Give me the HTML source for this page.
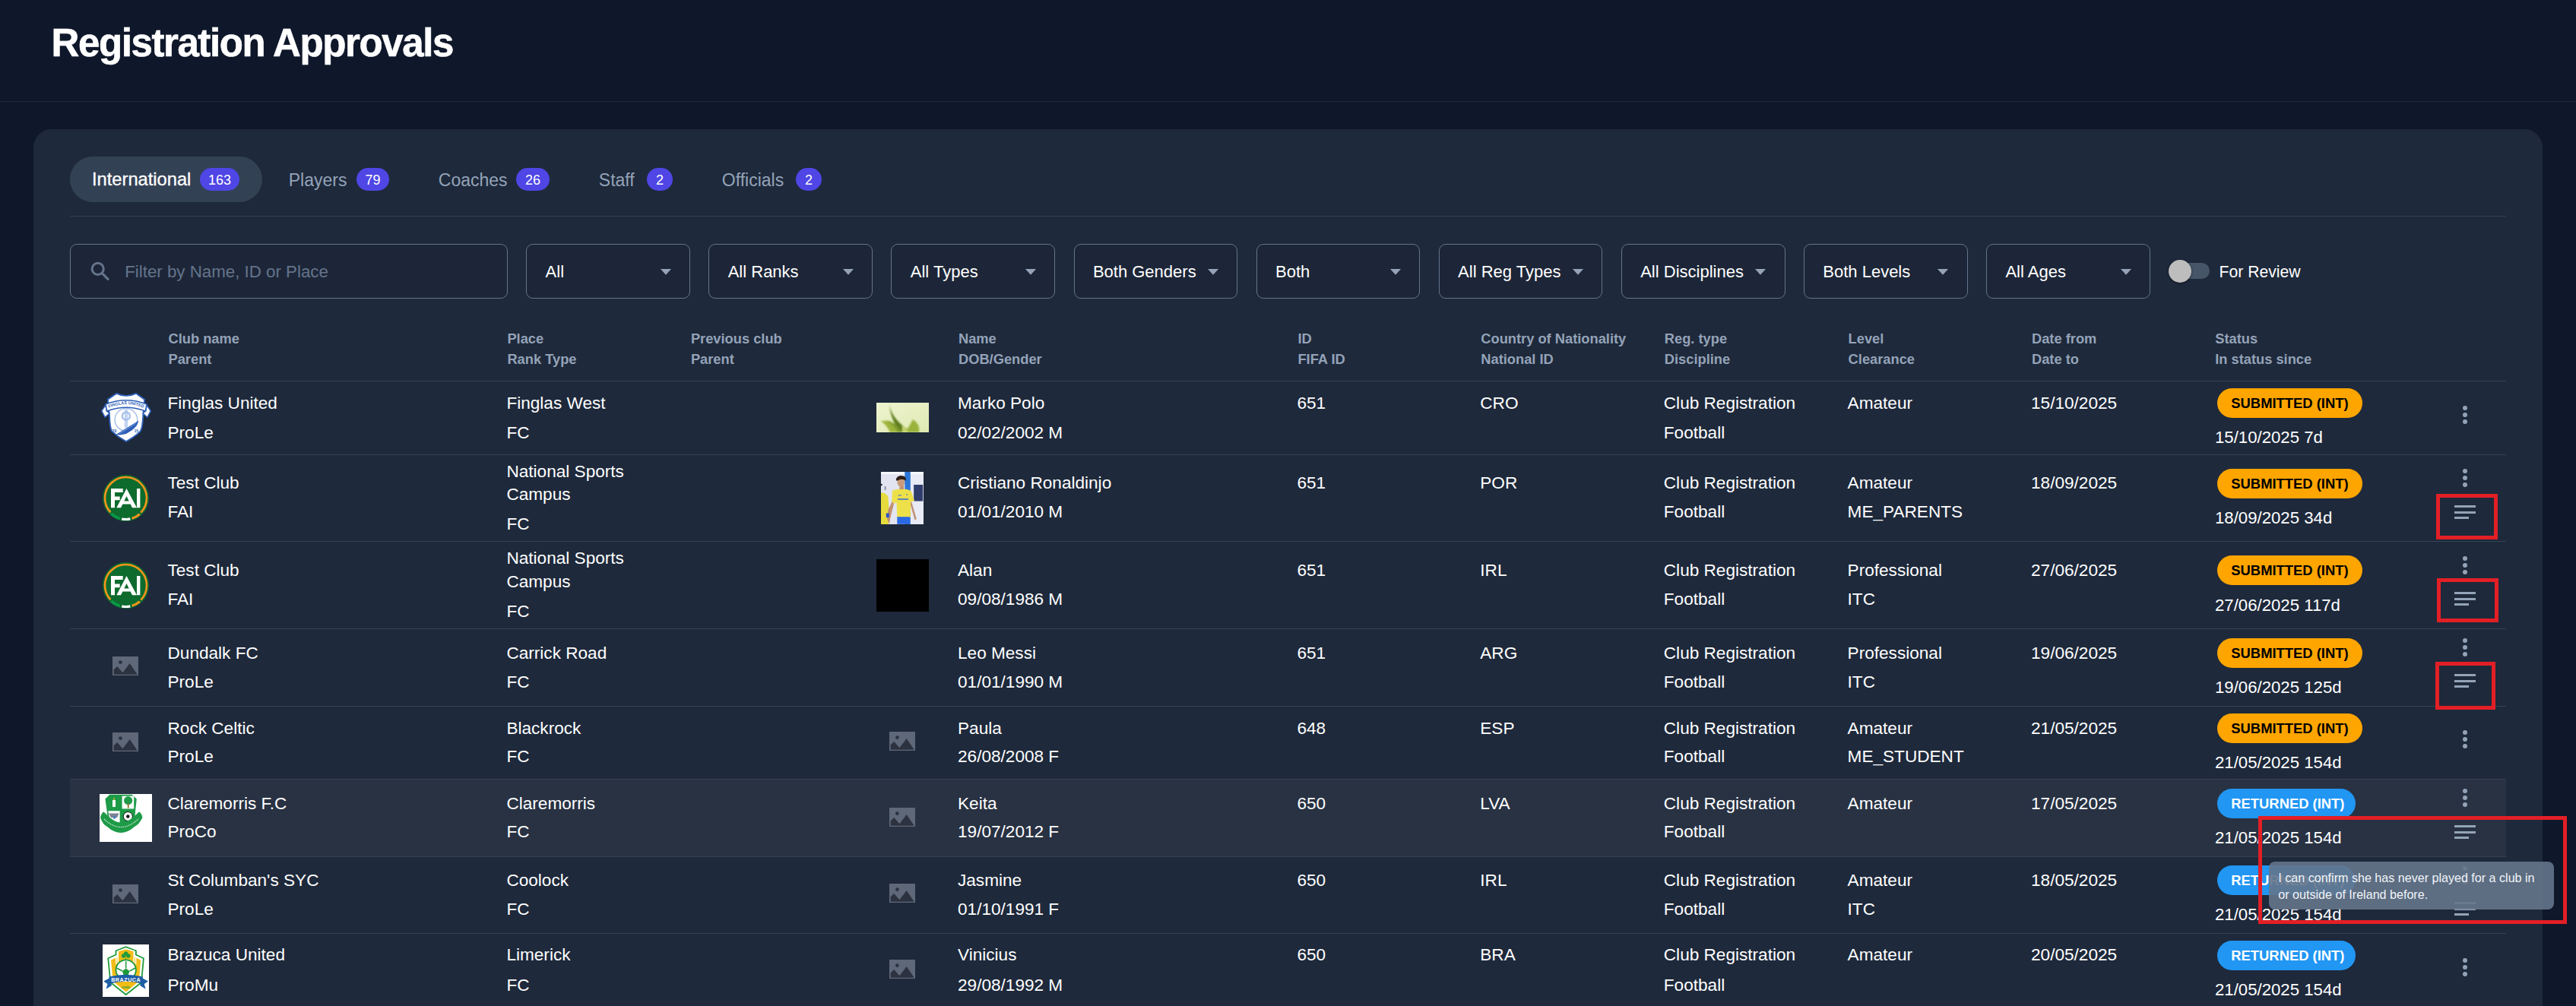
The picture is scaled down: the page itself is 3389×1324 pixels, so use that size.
<!DOCTYPE html>
<html><head><meta charset="utf-8"><style>
html,body{margin:0;padding:0;}
body{width:3389px;height:1324px;overflow:hidden;position:relative;background:#0f172a;font-family:"Liberation Sans", sans-serif;}
.t{position:absolute;white-space:nowrap;}
.r{position:absolute;}
</style></head><body>
<div class="t" style="left:67.5px;top:30.6px;font-size:51px;line-height:51px;font-weight:700;color:#ffffff;letter-spacing:-1.4px;-webkit-text-stroke:0.6px #fff;">Registration Approvals</div>
<div class="r" style="left:0.0px;top:133.0px;width:3389.0px;height:1.0px;background:#1e293b;"></div>
<div class="r" style="left:44.0px;top:170.0px;width:3301.0px;height:1230.0px;background:#1e293b;border-radius:24px;"></div>
<div class="r" style="left:92.0px;top:206.0px;width:253.0px;height:60.0px;background:#334155;border-radius:30px;"></div>
<div class="t" style="left:121.0px;top:224.9px;font-size:23.7px;line-height:23.7px;font-weight:400;color:#ffffff;-webkit-text-stroke:0.3px #fff;">International</div>
<div class="r" style="left:263.0px;top:221.0px;width:52.0px;height:30.0px;background:#4f46e5;border-radius:15px;"></div>
<div class="t" style="left:289.0px;top:227.9px;font-size:18px;line-height:18px;font-weight:400;color:#ffffff;transform:translateX(-50%);">163</div>
<div class="t" style="left:379.7px;top:225.5px;font-size:23px;line-height:23px;font-weight:400;color:#94a3b8;">Players</div>
<div class="r" style="left:469.0px;top:221.0px;width:43.0px;height:30.0px;background:#4f46e5;border-radius:15px;"></div>
<div class="t" style="left:490.5px;top:227.9px;font-size:18px;line-height:18px;font-weight:400;color:#ffffff;transform:translateX(-50%);">79</div>
<div class="t" style="left:576.8px;top:225.5px;font-size:23px;line-height:23px;font-weight:400;color:#94a3b8;">Coaches</div>
<div class="r" style="left:679.0px;top:221.0px;width:44.0px;height:30.0px;background:#4f46e5;border-radius:15px;"></div>
<div class="t" style="left:701.0px;top:227.9px;font-size:18px;line-height:18px;font-weight:400;color:#ffffff;transform:translateX(-50%);">26</div>
<div class="t" style="left:787.8px;top:225.5px;font-size:23px;line-height:23px;font-weight:400;color:#94a3b8;">Staff</div>
<div class="r" style="left:851.0px;top:221.0px;width:34.0px;height:30.0px;background:#4f46e5;border-radius:15px;"></div>
<div class="t" style="left:868.0px;top:227.9px;font-size:18px;line-height:18px;font-weight:400;color:#ffffff;transform:translateX(-50%);">2</div>
<div class="t" style="left:949.8px;top:225.5px;font-size:23px;line-height:23px;font-weight:400;color:#94a3b8;">Officials</div>
<div class="r" style="left:1047.0px;top:221.0px;width:34.0px;height:30.0px;background:#4f46e5;border-radius:15px;"></div>
<div class="t" style="left:1064.0px;top:227.9px;font-size:18px;line-height:18px;font-weight:400;color:#ffffff;transform:translateX(-50%);">2</div>
<div class="r" style="left:92.0px;top:284.0px;width:3205.0px;height:1.0px;background:#334155;"></div>
<div class="r" style="left:92.0px;top:321.0px;width:576.0px;height:72.0px;border:1px solid #64748b;border-radius:9px;box-sizing:border-box;background:#1d2638;"></div>
<svg class="r" style="left:116px;top:341px" width="32" height="32" viewBox="0 0 32 32"><circle cx="12.7" cy="12.9" r="7.6" fill="none" stroke="#64748b" stroke-width="3"/><line x1="18.3" y1="18.6" x2="26" y2="26.3" stroke="#64748b" stroke-width="3.2" stroke-linecap="round"/></svg>
<div class="t" style="left:164.2px;top:346.8px;font-size:22.3px;line-height:22.3px;font-weight:400;color:#64748b;">Filter by Name, ID or Place</div>
<div class="r" style="left:692.2px;top:321.0px;width:215.8px;height:72.0px;border:1px solid #64748b;border-radius:9px;box-sizing:border-box;background:#1d2638;"></div>
<div class="t" style="left:717.6px;top:347.3px;font-size:22px;line-height:22px;font-weight:400;color:#ffffff;">All</div>
<svg class="r" style="left:868.7px;top:353.5px" width="14" height="8" viewBox="0 0 14 8"><path d="M0 0H14L7 7.7Z" fill="#94a3b8"/></svg>
<div class="r" style="left:932.3px;top:321.0px;width:215.8px;height:72.0px;border:1px solid #64748b;border-radius:9px;box-sizing:border-box;background:#1d2638;"></div>
<div class="t" style="left:957.7px;top:347.3px;font-size:22px;line-height:22px;font-weight:400;color:#ffffff;">All Ranks</div>
<svg class="r" style="left:1108.8px;top:353.5px" width="14" height="8" viewBox="0 0 14 8"><path d="M0 0H14L7 7.7Z" fill="#94a3b8"/></svg>
<div class="r" style="left:1172.4px;top:321.0px;width:215.8px;height:72.0px;border:1px solid #64748b;border-radius:9px;box-sizing:border-box;background:#1d2638;"></div>
<div class="t" style="left:1197.8px;top:347.3px;font-size:22px;line-height:22px;font-weight:400;color:#ffffff;">All Types</div>
<svg class="r" style="left:1348.9px;top:353.5px" width="14" height="8" viewBox="0 0 14 8"><path d="M0 0H14L7 7.7Z" fill="#94a3b8"/></svg>
<div class="r" style="left:1412.5px;top:321.0px;width:215.8px;height:72.0px;border:1px solid #64748b;border-radius:9px;box-sizing:border-box;background:#1d2638;"></div>
<div class="t" style="left:1437.9px;top:347.3px;font-size:22px;line-height:22px;font-weight:400;color:#ffffff;">Both Genders</div>
<svg class="r" style="left:1589.0px;top:353.5px" width="14" height="8" viewBox="0 0 14 8"><path d="M0 0H14L7 7.7Z" fill="#94a3b8"/></svg>
<div class="r" style="left:1652.6px;top:321.0px;width:215.8px;height:72.0px;border:1px solid #64748b;border-radius:9px;box-sizing:border-box;background:#1d2638;"></div>
<div class="t" style="left:1678.0px;top:347.3px;font-size:22px;line-height:22px;font-weight:400;color:#ffffff;">Both</div>
<svg class="r" style="left:1829.1px;top:353.5px" width="14" height="8" viewBox="0 0 14 8"><path d="M0 0H14L7 7.7Z" fill="#94a3b8"/></svg>
<div class="r" style="left:1892.7px;top:321.0px;width:215.8px;height:72.0px;border:1px solid #64748b;border-radius:9px;box-sizing:border-box;background:#1d2638;"></div>
<div class="t" style="left:1918.1px;top:347.3px;font-size:22px;line-height:22px;font-weight:400;color:#ffffff;">All Reg Types</div>
<svg class="r" style="left:2069.2px;top:353.5px" width="14" height="8" viewBox="0 0 14 8"><path d="M0 0H14L7 7.7Z" fill="#94a3b8"/></svg>
<div class="r" style="left:2132.8px;top:321.0px;width:215.8px;height:72.0px;border:1px solid #64748b;border-radius:9px;box-sizing:border-box;background:#1d2638;"></div>
<div class="t" style="left:2158.2px;top:347.3px;font-size:22px;line-height:22px;font-weight:400;color:#ffffff;">All Disciplines</div>
<svg class="r" style="left:2309.3px;top:353.5px" width="14" height="8" viewBox="0 0 14 8"><path d="M0 0H14L7 7.7Z" fill="#94a3b8"/></svg>
<div class="r" style="left:2372.9px;top:321.0px;width:215.8px;height:72.0px;border:1px solid #64748b;border-radius:9px;box-sizing:border-box;background:#1d2638;"></div>
<div class="t" style="left:2398.3px;top:347.3px;font-size:22px;line-height:22px;font-weight:400;color:#ffffff;">Both Levels</div>
<svg class="r" style="left:2549.4px;top:353.5px" width="14" height="8" viewBox="0 0 14 8"><path d="M0 0H14L7 7.7Z" fill="#94a3b8"/></svg>
<div class="r" style="left:2613.0px;top:321.0px;width:215.8px;height:72.0px;border:1px solid #64748b;border-radius:9px;box-sizing:border-box;background:#1d2638;"></div>
<div class="t" style="left:2638.4px;top:347.3px;font-size:22px;line-height:22px;font-weight:400;color:#ffffff;">All Ages</div>
<svg class="r" style="left:2789.5px;top:353.5px" width="14" height="8" viewBox="0 0 14 8"><path d="M0 0H14L7 7.7Z" fill="#94a3b8"/></svg>
<div class="r" style="left:2860.0px;top:346.0px;width:47.0px;height:21.0px;background:#475569;border-radius:11px;"></div>
<div class="r" style="left:2852.7px;top:341.6px;width:30.5px;height:30.5px;background:#bdbdbd;border-radius:50%;box-shadow:0 1px 3px rgba(0,0,0,.5);"></div>
<div class="t" style="left:2919.5px;top:347.0px;font-size:21.2px;line-height:21.2px;font-weight:400;color:#ffffff;">For Review</div>
<div class="t" style="left:221.5px;top:436.9px;font-size:18.3px;line-height:18.3px;font-weight:700;color:#94a3b8;">Club name</div>
<div class="t" style="left:221.5px;top:464.1px;font-size:18.3px;line-height:18.3px;font-weight:700;color:#94a3b8;">Parent</div>
<div class="t" style="left:667.4px;top:436.9px;font-size:18.3px;line-height:18.3px;font-weight:700;color:#94a3b8;">Place</div>
<div class="t" style="left:667.4px;top:464.1px;font-size:18.3px;line-height:18.3px;font-weight:700;color:#94a3b8;">Rank Type</div>
<div class="t" style="left:908.9px;top:436.9px;font-size:18.3px;line-height:18.3px;font-weight:700;color:#94a3b8;">Previous club</div>
<div class="t" style="left:908.9px;top:464.1px;font-size:18.3px;line-height:18.3px;font-weight:700;color:#94a3b8;">Parent</div>
<div class="t" style="left:1261.0px;top:436.9px;font-size:18.3px;line-height:18.3px;font-weight:700;color:#94a3b8;">Name</div>
<div class="t" style="left:1261.0px;top:464.1px;font-size:18.3px;line-height:18.3px;font-weight:700;color:#94a3b8;">DOB/Gender</div>
<div class="t" style="left:1707.4px;top:436.9px;font-size:18.3px;line-height:18.3px;font-weight:700;color:#94a3b8;">ID</div>
<div class="t" style="left:1707.4px;top:464.1px;font-size:18.3px;line-height:18.3px;font-weight:700;color:#94a3b8;">FIFA ID</div>
<div class="t" style="left:1948.3px;top:436.9px;font-size:18.3px;line-height:18.3px;font-weight:700;color:#94a3b8;">Country of Nationality</div>
<div class="t" style="left:1948.3px;top:464.1px;font-size:18.3px;line-height:18.3px;font-weight:700;color:#94a3b8;">National ID</div>
<div class="t" style="left:2189.8px;top:436.9px;font-size:18.3px;line-height:18.3px;font-weight:700;color:#94a3b8;">Reg. type</div>
<div class="t" style="left:2189.8px;top:464.1px;font-size:18.3px;line-height:18.3px;font-weight:700;color:#94a3b8;">Discipline</div>
<div class="t" style="left:2431.6px;top:436.9px;font-size:18.3px;line-height:18.3px;font-weight:700;color:#94a3b8;">Level</div>
<div class="t" style="left:2431.6px;top:464.1px;font-size:18.3px;line-height:18.3px;font-weight:700;color:#94a3b8;">Clearance</div>
<div class="t" style="left:2673.0px;top:436.9px;font-size:18.3px;line-height:18.3px;font-weight:700;color:#94a3b8;">Date from</div>
<div class="t" style="left:2673.0px;top:464.1px;font-size:18.3px;line-height:18.3px;font-weight:700;color:#94a3b8;">Date to</div>
<div class="t" style="left:2914.2px;top:436.9px;font-size:18.3px;line-height:18.3px;font-weight:700;color:#94a3b8;">Status</div>
<div class="t" style="left:2914.2px;top:464.1px;font-size:18.3px;line-height:18.3px;font-weight:700;color:#94a3b8;">In status since</div>
<div class="r" style="left:92.0px;top:1025.3px;width:3205.0px;height:102.1px;background:#283243;"></div>
<div class="r" style="left:92.0px;top:501.3px;width:3205.0px;height:1.0px;background:#374151;"></div>
<div class="r" style="left:92.0px;top:598.3px;width:3205.0px;height:1.0px;background:#374151;"></div>
<div class="r" style="left:92.0px;top:712.2px;width:3205.0px;height:1.0px;background:#374151;"></div>
<div class="r" style="left:92.0px;top:827.4px;width:3205.0px;height:1.0px;background:#374151;"></div>
<div class="r" style="left:92.0px;top:929.0px;width:3205.0px;height:1.0px;background:#374151;"></div>
<div class="r" style="left:92.0px;top:1025.3px;width:3205.0px;height:1.0px;background:#374151;"></div>
<div class="r" style="left:92.0px;top:1127.4px;width:3205.0px;height:1.0px;background:#374151;"></div>
<div class="r" style="left:92.0px;top:1228.2px;width:3205.0px;height:1.0px;background:#374151;"></div>
<div class="t" style="left:220.5px;top:519.8px;font-size:22.6px;line-height:22.6px;font-weight:400;color:#ffffff;">Finglas United</div>
<div class="t" style="left:220.5px;top:558.5px;font-size:22.6px;line-height:22.6px;font-weight:400;color:#ffffff;">ProLe</div>
<div class="t" style="left:666.4px;top:519.8px;font-size:22.6px;line-height:22.6px;font-weight:400;color:#ffffff;">Finglas West</div>
<div class="t" style="left:666.4px;top:558.5px;font-size:22.6px;line-height:22.6px;font-weight:400;color:#ffffff;">FC</div>
<div class="t" style="left:1260.0px;top:519.8px;font-size:22.6px;line-height:22.6px;font-weight:400;color:#ffffff;">Marko Polo</div>
<div class="t" style="left:1260.0px;top:558.5px;font-size:22.6px;line-height:22.6px;font-weight:400;color:#ffffff;">02/02/2002 M</div>
<div class="t" style="left:1706.4px;top:519.8px;font-size:22.6px;line-height:22.6px;font-weight:400;color:#ffffff;">651</div>
<div class="t" style="left:1947.3px;top:519.8px;font-size:22.6px;line-height:22.6px;font-weight:400;color:#ffffff;">CRO</div>
<div class="t" style="left:2188.8px;top:519.8px;font-size:22.6px;line-height:22.6px;font-weight:400;color:#ffffff;">Club Registration</div>
<div class="t" style="left:2188.8px;top:558.5px;font-size:22.6px;line-height:22.6px;font-weight:400;color:#ffffff;">Football</div>
<div class="t" style="left:2430.6px;top:519.8px;font-size:22.6px;line-height:22.6px;font-weight:400;color:#ffffff;">Amateur</div>
<div class="t" style="left:2672.0px;top:519.8px;font-size:22.6px;line-height:22.6px;font-weight:400;color:#ffffff;">15/10/2025</div>
<div class="r" style="left:2917.0px;top:511.0px;width:191.0px;height:39.0px;background:#ffa500;border-radius:20px;"></div>
<div class="t" style="left:2935.3px;top:522.3px;font-size:18.4px;line-height:18.4px;font-weight:700;color:#000000;">SUBMITTED (INT)</div>
<div class="t" style="left:2914.0px;top:564.8px;font-size:22.2px;line-height:22.2px;font-weight:400;color:#ffffff;">15/10/2025 7d</div>
<div class="r" style="left:3240.0px;top:534.0px;width:6.0px;height:6.0px;background:#94a3b8;border-radius:50%;"></div>
<div class="r" style="left:3240.0px;top:543.0px;width:6.0px;height:6.0px;background:#94a3b8;border-radius:50%;"></div>
<div class="r" style="left:3240.0px;top:552.0px;width:6.0px;height:6.0px;background:#94a3b8;border-radius:50%;"></div>
<div class="t" style="left:220.5px;top:625.4px;font-size:22.6px;line-height:22.6px;font-weight:400;color:#ffffff;">Test Club</div>
<div class="t" style="left:220.5px;top:663.4px;font-size:22.6px;line-height:22.6px;font-weight:400;color:#ffffff;">FAI</div>
<div class="t" style="left:666.4px;top:609.5px;font-size:22.6px;line-height:22.6px;font-weight:400;color:#ffffff;">National Sports</div>
<div class="t" style="left:666.4px;top:640.3px;font-size:22.6px;line-height:22.6px;font-weight:400;color:#ffffff;">Campus</div>
<div class="t" style="left:666.4px;top:679.1px;font-size:22.6px;line-height:22.6px;font-weight:400;color:#ffffff;">FC</div>
<div class="t" style="left:1260.0px;top:625.4px;font-size:22.6px;line-height:22.6px;font-weight:400;color:#ffffff;">Cristiano Ronaldinjo</div>
<div class="t" style="left:1260.0px;top:663.4px;font-size:22.6px;line-height:22.6px;font-weight:400;color:#ffffff;">01/01/2010 M</div>
<div class="t" style="left:1706.4px;top:625.4px;font-size:22.6px;line-height:22.6px;font-weight:400;color:#ffffff;">651</div>
<div class="t" style="left:1947.3px;top:625.4px;font-size:22.6px;line-height:22.6px;font-weight:400;color:#ffffff;">POR</div>
<div class="t" style="left:2188.8px;top:625.4px;font-size:22.6px;line-height:22.6px;font-weight:400;color:#ffffff;">Club Registration</div>
<div class="t" style="left:2188.8px;top:663.4px;font-size:22.6px;line-height:22.6px;font-weight:400;color:#ffffff;">Football</div>
<div class="t" style="left:2430.6px;top:625.4px;font-size:22.6px;line-height:22.6px;font-weight:400;color:#ffffff;">Amateur</div>
<div class="t" style="left:2430.6px;top:663.4px;font-size:22.6px;line-height:22.6px;font-weight:400;color:#ffffff;">ME_PARENTS</div>
<div class="t" style="left:2672.0px;top:625.4px;font-size:22.6px;line-height:22.6px;font-weight:400;color:#ffffff;">18/09/2025</div>
<div class="r" style="left:2917.0px;top:617.0px;width:191.0px;height:39.0px;background:#ffa500;border-radius:20px;"></div>
<div class="t" style="left:2935.3px;top:628.3px;font-size:18.4px;line-height:18.4px;font-weight:700;color:#000000;">SUBMITTED (INT)</div>
<div class="t" style="left:2914.0px;top:670.8px;font-size:22.2px;line-height:22.2px;font-weight:400;color:#ffffff;">18/09/2025 34d</div>
<div class="r" style="left:3240.0px;top:617.0px;width:6.0px;height:6.0px;background:#94a3b8;border-radius:50%;"></div>
<div class="r" style="left:3240.0px;top:626.0px;width:6.0px;height:6.0px;background:#94a3b8;border-radius:50%;"></div>
<div class="r" style="left:3240.0px;top:635.0px;width:6.0px;height:6.0px;background:#94a3b8;border-radius:50%;"></div>
<div class="r" style="left:3229.0px;top:665.0px;width:28.0px;height:3.2px;background:#94a3b8;"></div>
<div class="r" style="left:3229.0px;top:672.5px;width:28.0px;height:3.1px;background:#94a3b8;"></div>
<div class="r" style="left:3229.0px;top:680.0px;width:19.0px;height:3.1px;background:#94a3b8;"></div>
<div class="t" style="left:220.5px;top:739.7px;font-size:22.6px;line-height:22.6px;font-weight:400;color:#ffffff;">Test Club</div>
<div class="t" style="left:220.5px;top:777.7px;font-size:22.6px;line-height:22.6px;font-weight:400;color:#ffffff;">FAI</div>
<div class="t" style="left:666.4px;top:724.3px;font-size:22.6px;line-height:22.6px;font-weight:400;color:#ffffff;">National Sports</div>
<div class="t" style="left:666.4px;top:755.4px;font-size:22.6px;line-height:22.6px;font-weight:400;color:#ffffff;">Campus</div>
<div class="t" style="left:666.4px;top:793.9px;font-size:22.6px;line-height:22.6px;font-weight:400;color:#ffffff;">FC</div>
<div class="t" style="left:1260.0px;top:739.7px;font-size:22.6px;line-height:22.6px;font-weight:400;color:#ffffff;">Alan</div>
<div class="t" style="left:1260.0px;top:777.7px;font-size:22.6px;line-height:22.6px;font-weight:400;color:#ffffff;">09/08/1986 M</div>
<div class="t" style="left:1706.4px;top:739.7px;font-size:22.6px;line-height:22.6px;font-weight:400;color:#ffffff;">651</div>
<div class="t" style="left:1947.3px;top:739.7px;font-size:22.6px;line-height:22.6px;font-weight:400;color:#ffffff;">IRL</div>
<div class="t" style="left:2188.8px;top:739.7px;font-size:22.6px;line-height:22.6px;font-weight:400;color:#ffffff;">Club Registration</div>
<div class="t" style="left:2188.8px;top:777.7px;font-size:22.6px;line-height:22.6px;font-weight:400;color:#ffffff;">Football</div>
<div class="t" style="left:2430.6px;top:739.7px;font-size:22.6px;line-height:22.6px;font-weight:400;color:#ffffff;">Professional</div>
<div class="t" style="left:2430.6px;top:777.7px;font-size:22.6px;line-height:22.6px;font-weight:400;color:#ffffff;">ITC</div>
<div class="t" style="left:2672.0px;top:739.7px;font-size:22.6px;line-height:22.6px;font-weight:400;color:#ffffff;">27/06/2025</div>
<div class="r" style="left:2917.0px;top:731.0px;width:191.0px;height:39.0px;background:#ffa500;border-radius:20px;"></div>
<div class="t" style="left:2935.3px;top:742.3px;font-size:18.4px;line-height:18.4px;font-weight:700;color:#000000;">SUBMITTED (INT)</div>
<div class="t" style="left:2914.0px;top:785.5px;font-size:22.2px;line-height:22.2px;font-weight:400;color:#ffffff;">27/06/2025 117d</div>
<div class="r" style="left:3240.0px;top:732.0px;width:6.0px;height:6.0px;background:#94a3b8;border-radius:50%;"></div>
<div class="r" style="left:3240.0px;top:741.0px;width:6.0px;height:6.0px;background:#94a3b8;border-radius:50%;"></div>
<div class="r" style="left:3240.0px;top:750.0px;width:6.0px;height:6.0px;background:#94a3b8;border-radius:50%;"></div>
<div class="r" style="left:3229.0px;top:779.0px;width:28.0px;height:3.2px;background:#94a3b8;"></div>
<div class="r" style="left:3229.0px;top:786.5px;width:28.0px;height:3.1px;background:#94a3b8;"></div>
<div class="r" style="left:3229.0px;top:794.0px;width:19.0px;height:3.1px;background:#94a3b8;"></div>
<div class="t" style="left:220.5px;top:848.7px;font-size:22.6px;line-height:22.6px;font-weight:400;color:#ffffff;">Dundalk FC</div>
<div class="t" style="left:220.5px;top:886.5px;font-size:22.6px;line-height:22.6px;font-weight:400;color:#ffffff;">ProLe</div>
<div class="t" style="left:666.4px;top:848.7px;font-size:22.6px;line-height:22.6px;font-weight:400;color:#ffffff;">Carrick Road</div>
<div class="t" style="left:666.4px;top:886.5px;font-size:22.6px;line-height:22.6px;font-weight:400;color:#ffffff;">FC</div>
<div class="t" style="left:1260.0px;top:848.7px;font-size:22.6px;line-height:22.6px;font-weight:400;color:#ffffff;">Leo Messi</div>
<div class="t" style="left:1260.0px;top:886.5px;font-size:22.6px;line-height:22.6px;font-weight:400;color:#ffffff;">01/01/1990 M</div>
<div class="t" style="left:1706.4px;top:848.7px;font-size:22.6px;line-height:22.6px;font-weight:400;color:#ffffff;">651</div>
<div class="t" style="left:1947.3px;top:848.7px;font-size:22.6px;line-height:22.6px;font-weight:400;color:#ffffff;">ARG</div>
<div class="t" style="left:2188.8px;top:848.7px;font-size:22.6px;line-height:22.6px;font-weight:400;color:#ffffff;">Club Registration</div>
<div class="t" style="left:2188.8px;top:886.5px;font-size:22.6px;line-height:22.6px;font-weight:400;color:#ffffff;">Football</div>
<div class="t" style="left:2430.6px;top:848.7px;font-size:22.6px;line-height:22.6px;font-weight:400;color:#ffffff;">Professional</div>
<div class="t" style="left:2430.6px;top:886.5px;font-size:22.6px;line-height:22.6px;font-weight:400;color:#ffffff;">ITC</div>
<div class="t" style="left:2672.0px;top:848.7px;font-size:22.6px;line-height:22.6px;font-weight:400;color:#ffffff;">19/06/2025</div>
<div class="r" style="left:2917.0px;top:840.0px;width:191.0px;height:39.0px;background:#ffa500;border-radius:20px;"></div>
<div class="t" style="left:2935.3px;top:851.3px;font-size:18.4px;line-height:18.4px;font-weight:700;color:#000000;">SUBMITTED (INT)</div>
<div class="t" style="left:2914.0px;top:894.1px;font-size:22.2px;line-height:22.2px;font-weight:400;color:#ffffff;">19/06/2025 125d</div>
<div class="r" style="left:3240.0px;top:840.0px;width:6.0px;height:6.0px;background:#94a3b8;border-radius:50%;"></div>
<div class="r" style="left:3240.0px;top:849.0px;width:6.0px;height:6.0px;background:#94a3b8;border-radius:50%;"></div>
<div class="r" style="left:3240.0px;top:858.0px;width:6.0px;height:6.0px;background:#94a3b8;border-radius:50%;"></div>
<div class="r" style="left:3229.0px;top:887.0px;width:28.0px;height:3.2px;background:#94a3b8;"></div>
<div class="r" style="left:3229.0px;top:894.5px;width:28.0px;height:3.1px;background:#94a3b8;"></div>
<div class="r" style="left:3229.0px;top:902.0px;width:19.0px;height:3.1px;background:#94a3b8;"></div>
<div class="t" style="left:220.5px;top:947.5px;font-size:22.6px;line-height:22.6px;font-weight:400;color:#ffffff;">Rock Celtic</div>
<div class="t" style="left:220.5px;top:985.4px;font-size:22.6px;line-height:22.6px;font-weight:400;color:#ffffff;">ProLe</div>
<div class="t" style="left:666.4px;top:947.5px;font-size:22.6px;line-height:22.6px;font-weight:400;color:#ffffff;">Blackrock</div>
<div class="t" style="left:666.4px;top:985.4px;font-size:22.6px;line-height:22.6px;font-weight:400;color:#ffffff;">FC</div>
<div class="t" style="left:1260.0px;top:947.5px;font-size:22.6px;line-height:22.6px;font-weight:400;color:#ffffff;">Paula</div>
<div class="t" style="left:1260.0px;top:985.4px;font-size:22.6px;line-height:22.6px;font-weight:400;color:#ffffff;">26/08/2008 F</div>
<div class="t" style="left:1706.4px;top:947.5px;font-size:22.6px;line-height:22.6px;font-weight:400;color:#ffffff;">648</div>
<div class="t" style="left:1947.3px;top:947.5px;font-size:22.6px;line-height:22.6px;font-weight:400;color:#ffffff;">ESP</div>
<div class="t" style="left:2188.8px;top:947.5px;font-size:22.6px;line-height:22.6px;font-weight:400;color:#ffffff;">Club Registration</div>
<div class="t" style="left:2188.8px;top:985.4px;font-size:22.6px;line-height:22.6px;font-weight:400;color:#ffffff;">Football</div>
<div class="t" style="left:2430.6px;top:947.5px;font-size:22.6px;line-height:22.6px;font-weight:400;color:#ffffff;">Amateur</div>
<div class="t" style="left:2430.6px;top:985.4px;font-size:22.6px;line-height:22.6px;font-weight:400;color:#ffffff;">ME_STUDENT</div>
<div class="t" style="left:2672.0px;top:947.5px;font-size:22.6px;line-height:22.6px;font-weight:400;color:#ffffff;">21/05/2025</div>
<div class="r" style="left:2917.0px;top:939.0px;width:191.0px;height:39.0px;background:#ffa500;border-radius:20px;"></div>
<div class="t" style="left:2935.3px;top:950.3px;font-size:18.4px;line-height:18.4px;font-weight:700;color:#000000;">SUBMITTED (INT)</div>
<div class="t" style="left:2914.0px;top:992.8px;font-size:22.2px;line-height:22.2px;font-weight:400;color:#ffffff;">21/05/2025 154d</div>
<div class="r" style="left:3240.0px;top:961.0px;width:6.0px;height:6.0px;background:#94a3b8;border-radius:50%;"></div>
<div class="r" style="left:3240.0px;top:970.0px;width:6.0px;height:6.0px;background:#94a3b8;border-radius:50%;"></div>
<div class="r" style="left:3240.0px;top:979.0px;width:6.0px;height:6.0px;background:#94a3b8;border-radius:50%;"></div>
<div class="t" style="left:220.5px;top:1046.8px;font-size:22.6px;line-height:22.6px;font-weight:400;color:#ffffff;">Claremorris F.C</div>
<div class="t" style="left:220.5px;top:1084.0px;font-size:22.6px;line-height:22.6px;font-weight:400;color:#ffffff;">ProCo</div>
<div class="t" style="left:666.4px;top:1046.8px;font-size:22.6px;line-height:22.6px;font-weight:400;color:#ffffff;">Claremorris</div>
<div class="t" style="left:666.4px;top:1084.0px;font-size:22.6px;line-height:22.6px;font-weight:400;color:#ffffff;">FC</div>
<div class="t" style="left:1260.0px;top:1046.8px;font-size:22.6px;line-height:22.6px;font-weight:400;color:#ffffff;">Keita</div>
<div class="t" style="left:1260.0px;top:1084.0px;font-size:22.6px;line-height:22.6px;font-weight:400;color:#ffffff;">19/07/2012 F</div>
<div class="t" style="left:1706.4px;top:1046.8px;font-size:22.6px;line-height:22.6px;font-weight:400;color:#ffffff;">650</div>
<div class="t" style="left:1947.3px;top:1046.8px;font-size:22.6px;line-height:22.6px;font-weight:400;color:#ffffff;">LVA</div>
<div class="t" style="left:2188.8px;top:1046.8px;font-size:22.6px;line-height:22.6px;font-weight:400;color:#ffffff;">Club Registration</div>
<div class="t" style="left:2188.8px;top:1084.0px;font-size:22.6px;line-height:22.6px;font-weight:400;color:#ffffff;">Football</div>
<div class="t" style="left:2430.6px;top:1046.8px;font-size:22.6px;line-height:22.6px;font-weight:400;color:#ffffff;">Amateur</div>
<div class="t" style="left:2672.0px;top:1046.8px;font-size:22.6px;line-height:22.6px;font-weight:400;color:#ffffff;">17/05/2025</div>
<div class="r" style="left:2917.0px;top:1038.0px;width:182.0px;height:39.0px;background:#2196f3;border-radius:20px;"></div>
<div class="t" style="left:2935.3px;top:1049.3px;font-size:18.4px;line-height:18.4px;font-weight:700;color:#ffffff;">RETURNED (INT)</div>
<div class="t" style="left:2914.0px;top:1091.5px;font-size:22.2px;line-height:22.2px;font-weight:400;color:#ffffff;">21/05/2025 154d</div>
<div class="r" style="left:3240.0px;top:1038.0px;width:6.0px;height:6.0px;background:#94a3b8;border-radius:50%;"></div>
<div class="r" style="left:3240.0px;top:1047.0px;width:6.0px;height:6.0px;background:#94a3b8;border-radius:50%;"></div>
<div class="r" style="left:3240.0px;top:1056.0px;width:6.0px;height:6.0px;background:#94a3b8;border-radius:50%;"></div>
<div class="r" style="left:3229.0px;top:1086.0px;width:28.0px;height:3.2px;background:#94a3b8;"></div>
<div class="r" style="left:3229.0px;top:1093.5px;width:28.0px;height:3.1px;background:#94a3b8;"></div>
<div class="r" style="left:3229.0px;top:1101.0px;width:19.0px;height:3.1px;background:#94a3b8;"></div>
<div class="t" style="left:220.5px;top:1148.0px;font-size:22.6px;line-height:22.6px;font-weight:400;color:#ffffff;">St Columban's SYC</div>
<div class="t" style="left:220.5px;top:1185.8px;font-size:22.6px;line-height:22.6px;font-weight:400;color:#ffffff;">ProLe</div>
<div class="t" style="left:666.4px;top:1148.0px;font-size:22.6px;line-height:22.6px;font-weight:400;color:#ffffff;">Coolock</div>
<div class="t" style="left:666.4px;top:1185.8px;font-size:22.6px;line-height:22.6px;font-weight:400;color:#ffffff;">FC</div>
<div class="t" style="left:1260.0px;top:1148.0px;font-size:22.6px;line-height:22.6px;font-weight:400;color:#ffffff;">Jasmine</div>
<div class="t" style="left:1260.0px;top:1185.8px;font-size:22.6px;line-height:22.6px;font-weight:400;color:#ffffff;">01/10/1991 F</div>
<div class="t" style="left:1706.4px;top:1148.0px;font-size:22.6px;line-height:22.6px;font-weight:400;color:#ffffff;">650</div>
<div class="t" style="left:1947.3px;top:1148.0px;font-size:22.6px;line-height:22.6px;font-weight:400;color:#ffffff;">IRL</div>
<div class="t" style="left:2188.8px;top:1148.0px;font-size:22.6px;line-height:22.6px;font-weight:400;color:#ffffff;">Club Registration</div>
<div class="t" style="left:2188.8px;top:1185.8px;font-size:22.6px;line-height:22.6px;font-weight:400;color:#ffffff;">Football</div>
<div class="t" style="left:2430.6px;top:1148.0px;font-size:22.6px;line-height:22.6px;font-weight:400;color:#ffffff;">Amateur</div>
<div class="t" style="left:2430.6px;top:1185.8px;font-size:22.6px;line-height:22.6px;font-weight:400;color:#ffffff;">ITC</div>
<div class="t" style="left:2672.0px;top:1148.0px;font-size:22.6px;line-height:22.6px;font-weight:400;color:#ffffff;">18/05/2025</div>
<div class="r" style="left:2917.0px;top:1139.0px;width:182.0px;height:39.0px;background:#2196f3;border-radius:20px;"></div>
<div class="t" style="left:2935.3px;top:1150.3px;font-size:18.4px;line-height:18.4px;font-weight:700;color:#ffffff;">RETURNED (INT)</div>
<div class="t" style="left:2914.0px;top:1192.8px;font-size:22.2px;line-height:22.2px;font-weight:400;color:#ffffff;">21/05/2025 154d</div>
<div class="r" style="left:3240.0px;top:1140.0px;width:6.0px;height:6.0px;background:#94a3b8;border-radius:50%;"></div>
<div class="r" style="left:3240.0px;top:1149.0px;width:6.0px;height:6.0px;background:#94a3b8;border-radius:50%;"></div>
<div class="r" style="left:3240.0px;top:1158.0px;width:6.0px;height:6.0px;background:#94a3b8;border-radius:50%;"></div>
<div class="r" style="left:3229.0px;top:1187.0px;width:28.0px;height:3.2px;background:#94a3b8;"></div>
<div class="r" style="left:3229.0px;top:1194.5px;width:28.0px;height:3.1px;background:#94a3b8;"></div>
<div class="r" style="left:3229.0px;top:1202.0px;width:19.0px;height:3.1px;background:#94a3b8;"></div>
<div class="t" style="left:220.5px;top:1246.2px;font-size:22.6px;line-height:22.6px;font-weight:400;color:#ffffff;">Brazuca United</div>
<div class="t" style="left:220.5px;top:1285.5px;font-size:22.6px;line-height:22.6px;font-weight:400;color:#ffffff;">ProMu</div>
<div class="t" style="left:666.4px;top:1246.2px;font-size:22.6px;line-height:22.6px;font-weight:400;color:#ffffff;">Limerick</div>
<div class="t" style="left:666.4px;top:1285.5px;font-size:22.6px;line-height:22.6px;font-weight:400;color:#ffffff;">FC</div>
<div class="t" style="left:1260.0px;top:1246.2px;font-size:22.6px;line-height:22.6px;font-weight:400;color:#ffffff;">Vinicius</div>
<div class="t" style="left:1260.0px;top:1285.5px;font-size:22.6px;line-height:22.6px;font-weight:400;color:#ffffff;">29/08/1992 M</div>
<div class="t" style="left:1706.4px;top:1246.2px;font-size:22.6px;line-height:22.6px;font-weight:400;color:#ffffff;">650</div>
<div class="t" style="left:1947.3px;top:1246.2px;font-size:22.6px;line-height:22.6px;font-weight:400;color:#ffffff;">BRA</div>
<div class="t" style="left:2188.8px;top:1246.2px;font-size:22.6px;line-height:22.6px;font-weight:400;color:#ffffff;">Club Registration</div>
<div class="t" style="left:2188.8px;top:1285.5px;font-size:22.6px;line-height:22.6px;font-weight:400;color:#ffffff;">Football</div>
<div class="t" style="left:2430.6px;top:1246.2px;font-size:22.6px;line-height:22.6px;font-weight:400;color:#ffffff;">Amateur</div>
<div class="t" style="left:2672.0px;top:1246.2px;font-size:22.6px;line-height:22.6px;font-weight:400;color:#ffffff;">20/05/2025</div>
<div class="r" style="left:2917.0px;top:1238.0px;width:182.0px;height:39.0px;background:#2196f3;border-radius:20px;"></div>
<div class="t" style="left:2935.3px;top:1249.3px;font-size:18.4px;line-height:18.4px;font-weight:700;color:#ffffff;">RETURNED (INT)</div>
<div class="t" style="left:2914.0px;top:1291.6px;font-size:22.2px;line-height:22.2px;font-weight:400;color:#ffffff;">21/05/2025 154d</div>
<div class="r" style="left:3240.0px;top:1261.0px;width:6.0px;height:6.0px;background:#94a3b8;border-radius:50%;"></div>
<div class="r" style="left:3240.0px;top:1270.0px;width:6.0px;height:6.0px;background:#94a3b8;border-radius:50%;"></div>
<div class="r" style="left:3240.0px;top:1279.0px;width:6.0px;height:6.0px;background:#94a3b8;border-radius:50%;"></div>
<svg class="r" style="left:132.7px;top:517px" width="66" height="65" viewBox="0 0 66 65">
<defs><path id="fgp" d="M11 19.6 Q33 10.5 55 19.6"/></defs>
<path d="M8.8 8.6 L20.4 0.8 Q33 7 45.9 0.8 L57.1 8.6 L55.3 30 Q54.5 46 51.7 50.6 Q44 58 32.9 64 Q22 58 14.1 50.6 Q11.5 46 11 30 Z" fill="#fff" stroke="#2f5fb8" stroke-width="1.9"/>
<circle cx="32.9" cy="35.4" r="14.8" fill="none" stroke="#a9c1ea" stroke-width="1.5"/>
<rect x="30.8" y="22" width="4.4" height="24" fill="#c3d4f2"/>
<circle cx="32.9" cy="30.5" r="5" fill="none" stroke="#a9c1ea" stroke-width="2.4"/>
<path d="M6 16 L0.7 23.8 L5.2 32.3 L11 27 L7.5 24 Z" fill="#fff" stroke="#2f5fb8" stroke-width="1.5" stroke-linejoin="round"/>
<path d="M60 16 L65.3 23.8 L60.8 32.3 L55 27 L58.5 24 Z" fill="#fff" stroke="#2f5fb8" stroke-width="1.5" stroke-linejoin="round"/>
<path d="M6 15 Q33 4.5 60 15 L58.5 24 Q33 14.5 7.5 24 Z" fill="#fff" stroke="#2f5fb8" stroke-width="1.7"/>
<text font-family="Liberation Sans" font-size="5.6" font-weight="700" fill="#2f5fb8"><textPath href="#fgp" startOffset="50%" text-anchor="middle">FINGLAS UNITED</textPath></text>
<path d="M19.5 55 L49.5 36.5 L47 43 L41 49 L33 54 L25 55.5 Z" fill="#2f5fb8"/>
<path d="M24 54 L46 40" stroke="#8fb0e8" stroke-width="0.7"/>
<text x="14.6" y="52" font-family="Liberation Sans" font-size="5.2" font-weight="700" fill="#2f5fb8">20</text>
<text x="43.4" y="52" font-family="Liberation Sans" font-size="5.2" font-weight="700" fill="#2f5fb8">15</text>
</svg>
<svg class="r" style="left:134.9px;top:624.7px" width="61" height="61" viewBox="0 0 61 61"><circle cx="30.5" cy="30.5" r="30.5" fill="#0e6b2e"/>
<path d="M10.39 49.25 A27.5 27.5 0 1 1 50.28 49.60" fill="none" stroke="#f7941d" stroke-width="2.6"/>
<path d="M22.78 57.42 A28 28 0 0 1 11.40 50.98" fill="none" stroke="#0a9a49" stroke-width="3.2"/>
<path d="M36.32 57.89 A28 28 0 0 1 25.16 57.99" fill="none" stroke="#ffffff" stroke-width="3.2"/>
<path d="M48.87 51.63 A28 28 0 0 1 38.69 57.28" fill="none" stroke="#f7941d" stroke-width="3.2"/>
<path d="M11 18 H26.7 V23 H16 V28.6 H22.7 V33.3 H16 V43.2 H11 Z" fill="#fff"/>
<path d="M31.5 18 L45 43.2 H39 L36.6 38.5 H26.4 L24 43.2 H18.3 Z M31.5 28 L28.3 34.6 H34.7 Z" fill="#fff" fill-rule="evenodd"/>
<rect x="45" y="18" width="4.4" height="25.2" fill="#fff"/>
</svg>
<svg class="r" style="left:134.9px;top:739.5px" width="61" height="61" viewBox="0 0 61 61"><circle cx="30.5" cy="30.5" r="30.5" fill="#0e6b2e"/>
<path d="M10.39 49.25 A27.5 27.5 0 1 1 50.28 49.60" fill="none" stroke="#f7941d" stroke-width="2.6"/>
<path d="M22.78 57.42 A28 28 0 0 1 11.40 50.98" fill="none" stroke="#0a9a49" stroke-width="3.2"/>
<path d="M36.32 57.89 A28 28 0 0 1 25.16 57.99" fill="none" stroke="#ffffff" stroke-width="3.2"/>
<path d="M48.87 51.63 A28 28 0 0 1 38.69 57.28" fill="none" stroke="#f7941d" stroke-width="3.2"/>
<path d="M11 18 H26.7 V23 H16 V28.6 H22.7 V33.3 H16 V43.2 H11 Z" fill="#fff"/>
<path d="M31.5 18 L45 43.2 H39 L36.6 38.5 H26.4 L24 43.2 H18.3 Z M31.5 28 L28.3 34.6 H34.7 Z" fill="#fff" fill-rule="evenodd"/>
<rect x="45" y="18" width="4.4" height="25.2" fill="#fff"/>
</svg>
<svg class="r" style="left:148.3px;top:864px" width="34" height="25" viewBox="0 0 34 25"><rect width="34" height="25" fill="#5f6878"/>
<circle cx="10.4" cy="7.6" r="2.4" fill="#2c3240"/>
<path d="M1.7 17.3 L6.2 13 L13.4 21.2 L22.7 9 L32.7 23.7 H1.7 Z" fill="#2c3240"/></svg>
<svg class="r" style="left:148.3px;top:964px" width="34" height="25" viewBox="0 0 34 25"><rect width="34" height="25" fill="#5f6878"/>
<circle cx="10.4" cy="7.6" r="2.4" fill="#2c3240"/>
<path d="M1.7 17.3 L6.2 13 L13.4 21.2 L22.7 9 L32.7 23.7 H1.7 Z" fill="#2c3240"/></svg>
<svg class="r" style="left:131px;top:1044.8px" width="69" height="63" viewBox="0 0 69 63"><rect width="69" height="63" fill="#fff"/>
<path d="M13.4 0.8 H42.5 L48.8 6.4 L47.3 20 L46.2 34 Q40 40 27.9 43.5 Q16 40 11.2 34 L9.3 20 L7.4 6.4 Z" fill="#1e9b48"/>
<rect x="29.6" y="2.6" width="15.6" height="16.8" fill="#fff"/>
<path d="M11.3 22.2 H26.6 V41 Q17 38 13 33 Z" fill="#fff"/>
<rect x="17" y="8" width="4" height="9" fill="#fff"/><rect x="18.5" y="5" width="1.2" height="3" fill="#e8c530"/>
<circle cx="37.6" cy="8.6" r="5.6" fill="#1e9b48"/><rect x="36.8" y="12" width="1.8" height="6.5" fill="#8a6d2d"/>
<path d="M12 25.5 H25.5 L23 31 H15 Z" fill="#7b8290"/><circle cx="19.5" cy="31" r="1.8" fill="#3f7fd0"/>
<circle cx="37.3" cy="29.5" r="6" fill="#fff" stroke="#111" stroke-width="1"/><circle cx="37.3" cy="29.5" r="2.2" fill="#111"/>
<path d="M1 31 Q2.5 24.5 5.5 23.5 L10.5 28 Q28 47 47 28 L52 23.5 Q55 24.5 56.5 31 Q52 40 46 43 Q28 59 10 43 Q4 40 1 31 Z" fill="#1e9b48"/>
<path d="M6 33 Q28 54 51 33" fill="none" stroke="#d6eedb" stroke-width="1.1" stroke-dasharray="1.6 0.9"/>
</svg>
<svg class="r" style="left:148.3px;top:1164px" width="34" height="25" viewBox="0 0 34 25"><rect width="34" height="25" fill="#5f6878"/>
<circle cx="10.4" cy="7.6" r="2.4" fill="#2c3240"/>
<path d="M1.7 17.3 L6.2 13 L13.4 21.2 L22.7 9 L32.7 23.7 H1.7 Z" fill="#2c3240"/></svg>
<svg class="r" style="left:134.9px;top:1242.8px" width="61" height="69" viewBox="0 0 61 69"><rect width="61" height="69" fill="#fff"/>
<path d="M7.2 18.3 L17.5 13.5 V8.3 L30.7 3.2 L43.9 8.3 V13.5 L53.9 18.3 L51 50 L30.7 66 L10.4 50 Z" fill="#fff" stroke="#1f9a3c" stroke-width="1.8"/>
<path d="M11 20.5 L19.8 16.5 V23 H41.6 V16.5 L50.2 20.5 L47.8 48.5 L30.7 62.5 L13.6 48.5 Z" fill="#f3bd17"/>
<path d="M20.3 8.6 L30.7 5.6 L41.1 8.6 V24 H20.3 Z" fill="#f3bd17" stroke="#fff" stroke-width="1.4"/>
<path d="M17.8 17 V26 M43.6 17 V26" stroke="#fff" stroke-width="1.4"/>
<circle cx="30.7" cy="12" r="2.7" fill="#1f9a3c"/><circle cx="27.6" cy="15" r="2.7" fill="#1f9a3c"/><circle cx="33.8" cy="15" r="2.7" fill="#1f9a3c"/>
<path d="M30.7 15 L30.2 20 H31.2 Z" fill="#1f9a3c"/>
<circle cx="30.7" cy="33.5" r="13.2" fill="#fff" stroke="#1f9a3c" stroke-width="1.8"/>
<path d="M30.7 31.5 L35.5 35 L33.7 40.5 H27.7 L25.9 35 Z" fill="#1f9a3c"/>
<path d="M30.7 31.5 V22 M35.5 35 L43 31 M25.9 35 L18.4 31" stroke="#1f9a3c" stroke-width="1.5"/>
<path d="M1.2 48.5 L9.5 44 L12 54 L4.5 58.8 L6.5 52 Z" fill="#1c5ea6"/>
<path d="M60 48.5 L51.7 44 L49.2 54 L56.7 58.8 L54.7 52 Z" fill="#1c5ea6"/>
<path d="M8.4 42.5 Q30.7 37 52.9 42.5 L52 51.5 Q30.7 46 9.3 51.5 Z" fill="#1c5ea6"/>
<text x="30.7" y="49.2" font-family="Liberation Sans" font-size="7.2" font-weight="700" fill="#fff" text-anchor="middle" letter-spacing="0.5">BRAZUCA</text>
<text x="30.7" y="58" font-family="Liberation Sans" font-size="3" font-weight="700" fill="#1f9a3c" text-anchor="middle">UNITED</text>
</svg>
<svg class="r" style="left:1153px;top:530px" width="69" height="39" viewBox="0 0 69 39"><defs><filter id="bl" x="-20%" y="-20%" width="140%" height="140%"><feGaussianBlur stdDeviation="1.1"/></filter>
<linearGradient id="mg" x1="0" y1="0" x2="1" y2="1"><stop offset="0" stop-color="#eef4cf"/><stop offset="1" stop-color="#dfe9b4"/></linearGradient></defs>
<rect width="69" height="39" fill="url(#mg)"/>
<g filter="url(#bl)">
<path d="M17 1 Q19 22 47 39 H33 Q19 26 17 1 Z" fill="#5f7d1c"/>
<path d="M6 24 Q22 22 30 39 H18 Q14 30 6 24 Z" fill="#9db43a"/>
<path d="M12 23 Q24 24 34 39 H28 Q22 28 12 23 Z" fill="#7d9a2a"/>
<path d="M48 22 Q58 28 56 39 H38 Q44 30 48 22 Z" fill="#98b23a"/>
<path d="M34 30 Q40 34 42 39 H34 Z" fill="#c3d46a"/>
</g></svg>
<svg class="r" style="left:1158.9px;top:621px" width="56" height="69" viewBox="0 0 56 69"><defs><filter id="bl2" x="-10%" y="-10%" width="120%" height="120%"><feGaussianBlur stdDeviation="0.5"/></filter></defs>
<rect width="56" height="69" fill="#e8ebf5"/>
<g filter="url(#bl2)">
<rect x="0" y="0" width="56" height="3" fill="#f6f7fc"/>
<rect x="0" y="3" width="31" height="66" fill="#e2e5f1"/>
<rect x="31.3" y="0" width="7.5" height="69" fill="#2a74d8"/>
<rect x="42.5" y="16.5" width="13" height="22.5" fill="#d9dcea"/>
<rect x="43.2" y="17" width="11.9" height="21.5" fill="#2e3d6c"/>
<rect x="4.6" y="19" width="2" height="5" fill="#8d93a8"/>
<circle cx="0.6" cy="17" r="1.2" fill="#222"/>
<path d="M0 27.4 Q7 27 9.5 33 L10.5 50 L10 69 H0 Z" fill="#e6dc3c"/>
<path d="M40 38.5 L46.8 62 L44.5 63.5 L38.5 42 Z" fill="#c09172"/>
<path d="M15 38.5 L9.4 49.7 L8 62 L11 68.8 L12 62 L17 42 Z" fill="#c09172"/>
<rect x="6.8" y="54.5" width="4" height="5.5" fill="#2b57c8"/>
<path d="M15 24.5 Q22 22.3 27 22.6 Q34 22.3 39.5 25 L44 38 L39.2 39.5 L38.8 60 H21.3 L20.5 40 L17 42 L14.3 38.5 Z" fill="#ede04a"/>
<path d="M22 36 H36" stroke="#3e6fd2" stroke-width="1.6"/>
<path d="M22.5 31 H27 M33 30 H35" stroke="#3e6fd2" stroke-width="1.2"/>
<path d="M21.3 59.2 H38 L38 68.8 H21.3 Z" fill="#2b6ae4"/>
<rect x="24.5" y="17" width="5.5" height="6" fill="#c09172"/>
<ellipse cx="26.3" cy="14" rx="4.8" ry="5.8" fill="#c89a7a"/>
<path d="M19.8 11.5 Q20 5 26.5 5 Q33.5 5 32.9 11 Q32 12.5 30.5 10.5 Q26 8.5 22 11.5 Z" fill="#2a1a14"/>
</g></svg>
<div class="r" style="left:1153.0px;top:735.8px;width:69.0px;height:68.8px;background:#000;"></div>
<svg class="r" style="left:1170px;top:962.6px" width="34" height="25" viewBox="0 0 34 25"><rect width="34" height="25" fill="#5f6878"/>
<circle cx="10.4" cy="7.6" r="2.4" fill="#2c3240"/>
<path d="M1.7 17.3 L6.2 13 L13.4 21.2 L22.7 9 L32.7 23.7 H1.7 Z" fill="#2c3240"/></svg>
<svg class="r" style="left:1170px;top:1062.5px" width="34" height="25" viewBox="0 0 34 25"><rect width="34" height="25" fill="#5f6878"/>
<circle cx="10.4" cy="7.6" r="2.4" fill="#2c3240"/>
<path d="M1.7 17.3 L6.2 13 L13.4 21.2 L22.7 9 L32.7 23.7 H1.7 Z" fill="#2c3240"/></svg>
<svg class="r" style="left:1170px;top:1162.5px" width="34" height="25" viewBox="0 0 34 25"><rect width="34" height="25" fill="#5f6878"/>
<circle cx="10.4" cy="7.6" r="2.4" fill="#2c3240"/>
<path d="M1.7 17.3 L6.2 13 L13.4 21.2 L22.7 9 L32.7 23.7 H1.7 Z" fill="#2c3240"/></svg>
<svg class="r" style="left:1170px;top:1262.5px" width="34" height="25" viewBox="0 0 34 25"><rect width="34" height="25" fill="#5f6878"/>
<circle cx="10.4" cy="7.6" r="2.4" fill="#2c3240"/>
<path d="M1.7 17.3 L6.2 13 L13.4 21.2 L22.7 9 L32.7 23.7 H1.7 Z" fill="#2c3240"/></svg>
<div class="r" style="left:3205.0px;top:650.0px;width:81.0px;height:60.0px;border:5px solid #e31f26;box-sizing:border-box;"></div>
<div class="r" style="left:3206.0px;top:761.0px;width:81.0px;height:58.0px;border:5px solid #e31f26;box-sizing:border-box;"></div>
<div class="r" style="left:3204.0px;top:871.0px;width:79.0px;height:62.6px;border:5px solid #e31f26;box-sizing:border-box;"></div>
<div class="r" style="left:2985.0px;top:1134.3px;width:375.0px;height:62.4px;background:rgba(100,116,139,0.9);border-radius:8px;"></div>
<div class="t" style="left:2997.3px;top:1147.2px;font-size:16.1px;line-height:16.1px;font-weight:400;color:#f1f5f9;">I can confirm she has never played for a club in</div>
<div class="t" style="left:2997.3px;top:1169.0px;font-size:16.1px;line-height:16.1px;font-weight:400;color:#f1f5f9;">or outside of Ireland before.</div>
<div class="r" style="left:2971.0px;top:1074.0px;width:406.0px;height:141.6px;border:5px solid #e31f26;box-sizing:border-box;"></div>
</body></html>
